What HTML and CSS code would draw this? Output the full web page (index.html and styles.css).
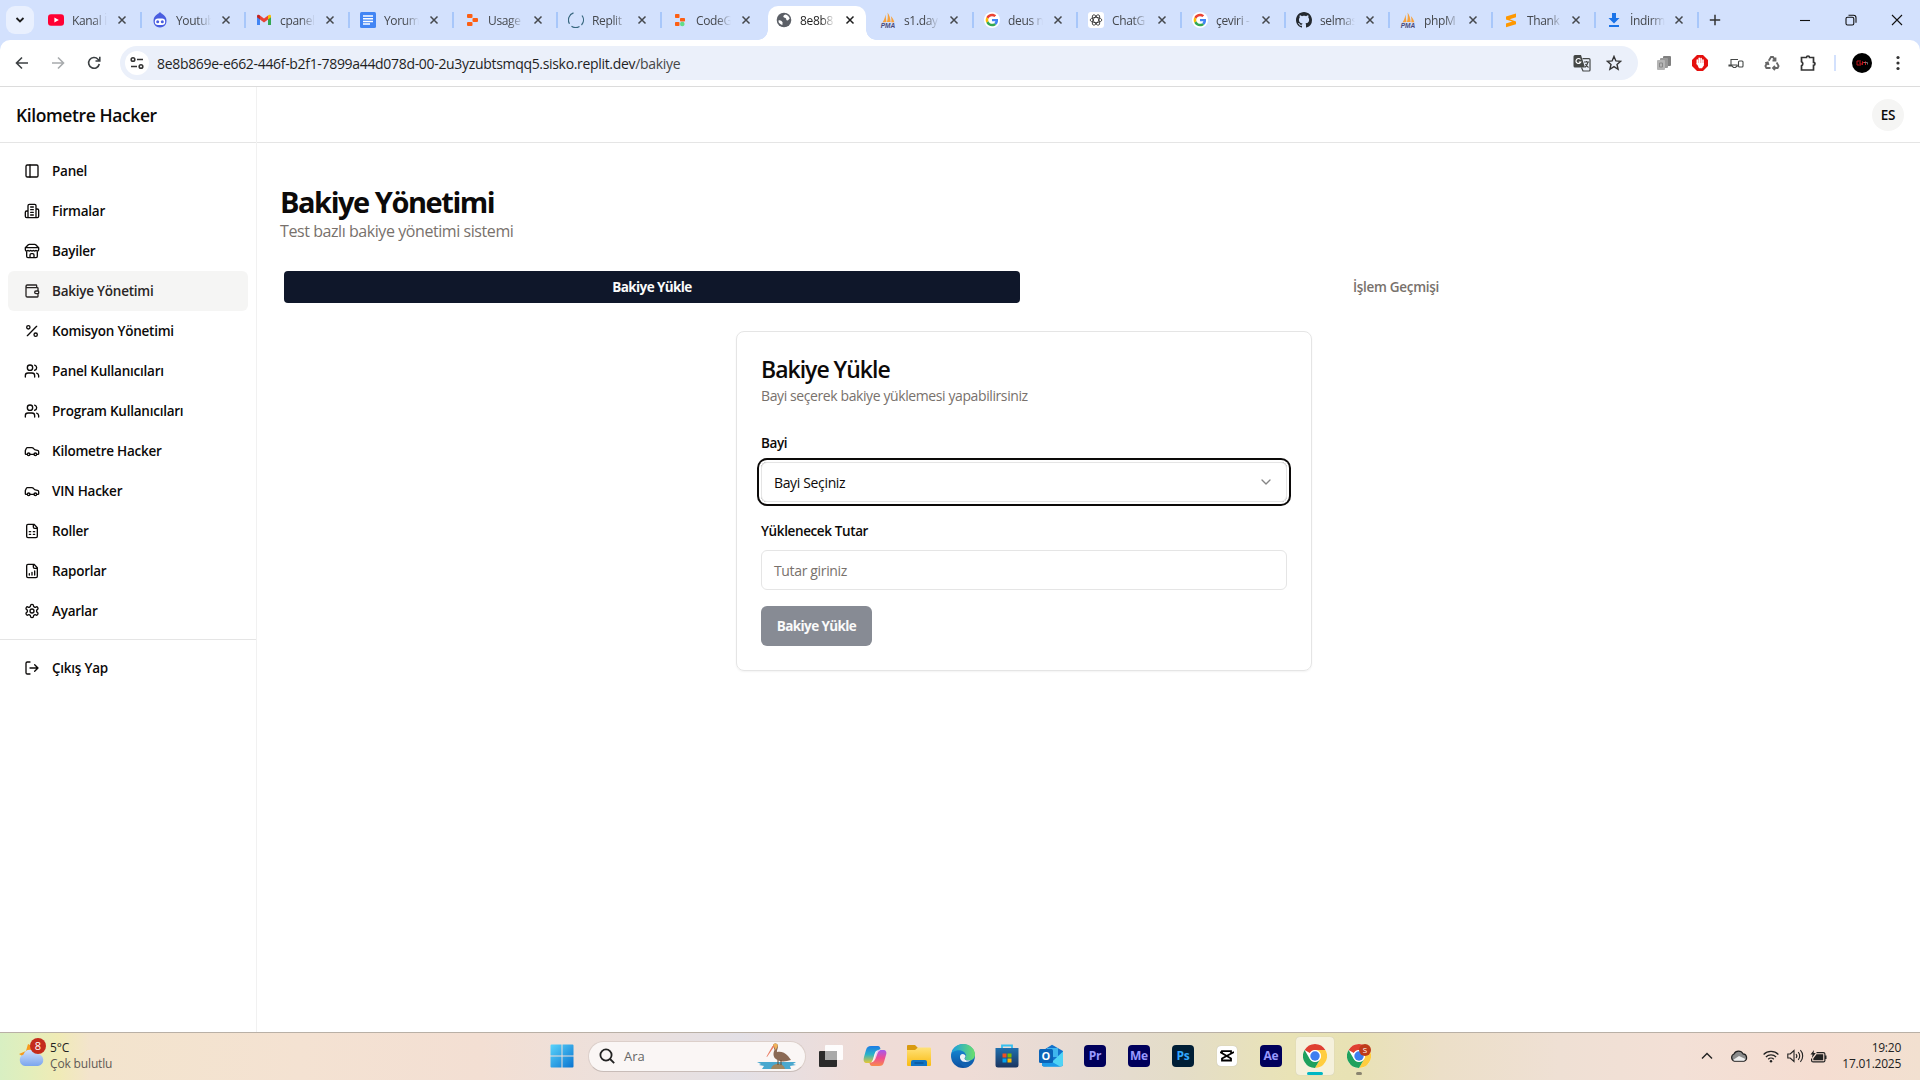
FILE: index.html
```html
<!DOCTYPE html>
<html lang="tr">
<head>
<meta charset="utf-8">
<title>Bakiye Yönetimi</title>
<link rel="stylesheet" href="styles.css">
</head>
<body>
<svg class="defs" aria-hidden="true">
  <defs>
    <linearGradient id="win" x1="0" y1="0" x2="1" y2="1"><stop offset="0" stop-color="#5ad4fb"/><stop offset="1" stop-color="#0a74d0"/></linearGradient>
    <linearGradient id="cloud" x1="0" y1="0" x2="0" y2="1"><stop offset="0" stop-color="#cfe0fb"/><stop offset="1" stop-color="#7aa5ee"/></linearGradient>
    <linearGradient id="edgeA" x1="0" y1="0" x2="1" y2="0"><stop offset="0" stop-color="#1b9de2"/><stop offset="1" stop-color="#6be06a"/></linearGradient>
    <linearGradient id="edgeB" x1="0" y1="0" x2="0" y2="1"><stop offset="0" stop-color="#1a96e0"/><stop offset="1" stop-color="#0c4fa0"/></linearGradient>
    <linearGradient id="folder" x1="0" y1="0" x2="0" y2="1"><stop offset="0" stop-color="#ffe27a"/><stop offset="1" stop-color="#f9bb12"/></linearGradient>
    <linearGradient id="store" x1="0" y1="0" x2="0" y2="1"><stop offset="0" stop-color="#1f6fae"/><stop offset="1" stop-color="#1b3560"/></linearGradient>
    <linearGradient id="copA" x1="0" y1="0" x2="0" y2="1"><stop offset="0" stop-color="#1c7be6"/><stop offset=".5" stop-color="#2bb3c8"/><stop offset="1" stop-color="#e8c832"/></linearGradient>
    <linearGradient id="copB" x1="0" y1="0" x2="0" y2="1"><stop offset="0" stop-color="#a45af0"/><stop offset=".5" stop-color="#ee4d93"/><stop offset="1" stop-color="#f98a4b"/></linearGradient>
    <symbol id="google" viewBox="0 0 48 48"><circle cx="24" cy="24" r="24" fill="#fff"/><g transform="translate(5 5) scale(.79)"><path fill="#EA4335" d="M24 9.500c3.540 0 6.710 1.220 9.210 3.600l6.850-6.850C35.900 2.380 30.470 0 24 0 14.620 0 6.510 5.380 2.560 13.220l7.980 6.190C12.430 13.720 17.740 9.500 24 9.500z"/><path fill="#4285F4" d="M46.980 24.550c0-1.570-.15-3.090-.38-4.550H24v9.020h12.940c-.58 2.960-2.260 5.480-4.780 7.180l7.730 6c4.510-4.180 7.090-10.360 7.090-17.650z"/><path fill="#FBBC05" d="M10.530 28.590A14.500 14.500 0 0 1 9.770 24c0-1.600.27-3.140.76-4.590l-7.980-6.190A23.900 23.900 0 0 0 0 24c0 3.880.92 7.540 2.560 10.780z"/><path fill="#34A853" d="M24 48c6.480 0 11.930-2.130 15.890-5.810l-7.730-6c-2.150 1.450-4.920 2.300-8.160 2.300-6.260 0-11.570-4.220-13.470-9.910l-7.980 6.190C6.510 42.620 14.620 48 24 48z"/></g></symbol>
    <symbol id="pma" viewBox="0 0 16 16"><path fill="#f7a13a" d="M2.500 10.500C4 8 5 6 5.400 2.500L6.500 10zM7 10C7.800 7 8 4 7.600.5c2 3 2.800 6 3 9.500zM11.300 10.300c.3-2 .2-4-.5-6.300 1.800 2 3 4 3.600 6.300z"/><text x="8" y="15.800" text-anchor="middle" class="pma-text">PMA</text></symbol>
    <symbol id="chrome" viewBox="0 0 24 24"><circle cx="12" cy="12" r="12" fill="#fff"/><path fill="#df4031" d="M12 0a12 12 0 0 1 10.400 6H12a6 6 0 0 0-5.200 3L1.600 6A12 12 0 0 1 12 0z"/><path fill="#ffcd40" d="M22.400 6A12 12 0 0 1 12 24l5.200-9A6 6 0 0 0 12 6z"/><path fill="#1fa15d" d="M1.600 6l5.200 9a6 6 0 0 0 10.400 0L12 24A12 12 0 0 1 1.600 6z"/><circle cx="12" cy="12" r="5.800" fill="#fff"/><circle cx="12" cy="12" r="4.700" fill="#3d7ef0"/></symbol>
    <symbol id="x" viewBox="0 0 10 10"><path d="M1.500 1.500l7 7M8.500 1.500l-7 7" stroke="currentColor" stroke-width="1.500" fill="none"/></symbol>
    <symbol id="users" viewBox="0 0 24 24"><path d="M16 21v-2a4 4 0 0 0-4-4H6a4 4 0 0 0-4 4v2"/><circle cx="9" cy="7" r="4"/><path d="M22 21v-2a4 4 0 0 0-3-3.870M16 3.130a4 4 0 0 1 0 7.750"/></symbol>
    <symbol id="car" viewBox="0 0 24 24"><path d="M19 17h2c.6 0 1-.4 1-1v-3c0-.9-.7-1.700-1.500-1.900C18.700 10.600 16 10 16 10s-1.300-1.400-2.200-2.300c-.5-.4-1.100-.7-1.800-.7H5c-.6 0-1.100.4-1.400.9l-1.400 2.900A3.700 3.700 0 0 0 2 12v4c0 .6.4 1 1 1h2"/><circle cx="7" cy="17" r="2"/><path d="M9 17h6"/><circle cx="17" cy="17" r="2"/></symbol>
  </defs>
</svg>

<header class="tabstrip">
  <div class="tab-search"><svg width="10" height="10" viewBox="0 0 10 10"><path d="M1.500 3L5 6.500 8.500 3" fill="none" stroke="#1f1f1f" stroke-width="1.800"/></svg></div>
  <div class="tabs">
    <div class="tab"><svg class="fav" viewBox="0 0 16 16"><rect y="2.300" width="16" height="11.500" rx="3" fill="#ff0033"/><path d="M6.400 5.500v5L10.800 8z" fill="#fff"/></svg><span class="tt">Kanal İ</span><svg class="x"><use href="#x"/></svg></div>
    <div class="tab"><svg class="fav" viewBox="0 0 16 16"><path d="M8 0c1 1.500 5 3 6.200 6.500C15.500 12 12.500 15.500 8 15.500S.5 12 1.800 6.500C3 3 7 1.500 8 0z" fill="#4a5ee0"/><rect x="2.800" y="6.500" width="10.400" height="6.500" rx="3.200" fill="#fff"/><circle cx="5.700" cy="9.700" r="1.500" fill="#4a5ee0"/><circle cx="10.300" cy="9.700" r="1.500" fill="#4a5ee0"/></svg><span class="tt">Youtub</span><svg class="x"><use href="#x"/></svg></div>
    <div class="tab"><svg class="fav" viewBox="0 0 16 16"><path d="M1 4.500V13h3V7z" fill="#4285f4"/><path d="M12 7v6h3V4.500z" fill="#34a853"/><path d="M4 3.500L8 6.600l4-3.100v4L8 10.500 4 7.500z" fill="#ea4335"/><path d="M1 4.300C1 2.500 3 2.400 4 3.400v4.100L1 5.300z" fill="#c5221f"/><path d="M15 4.300c0-1.800-2-1.900-3-.9v4.100l3-2.200z" fill="#fbbc04"/></svg><span class="tt">cpanel</span><svg class="x"><use href="#x"/></svg></div>
    <div class="tab"><svg class="fav" viewBox="0 0 16 16"><rect width="16" height="16" rx="1.500" fill="#4285f4"/><path d="M3 4h10M3 6.700h10M3 9.400h10M3 12.100h7" stroke="#fff" stroke-width="1.500"/></svg><span class="tt">Yorum</span><svg class="x"><use href="#x"/></svg></div>
    <div class="tab"><svg class="fav" viewBox="0 0 16 16" fill="#fd5f13"><rect x="3" y="2" width="5.500" height="4" rx="1"/><rect x="8.500" y="6" width="5.500" height="4" rx="1"/><rect x="3" y="10" width="5.500" height="4" rx="1"/></svg><span class="tt">Usage</span><svg class="x"><use href="#x"/></svg></div>
    <div class="tab"><svg class="fav" viewBox="0 0 16 16" fill="none" stroke="#37677f" stroke-width="1.200"><path d="M5.500.9A7.500 7.500 0 0 0 1.500 11.800M14 3.500a7.500 7.500 0 0 1-.5 9.500M3.500 14.200A7.500 7.500 0 0 0 11.500 14.600"/></svg><span class="tt">Replit</span><svg class="x"><use href="#x"/></svg></div>
    <div class="tab"><svg class="fav" viewBox="0 0 16 16" fill="#fd5f13"><rect x="3" y="2" width="4.500" height="4" rx=".8"/><rect x="8" y="6" width="5" height="3.500" rx=".8"/><rect x="3" y="10" width="4.500" height="4" rx=".8"/><circle cx="10.300" cy="12" r="2.300" fill="#63dd88"/></svg><span class="tt">CodeG</span><svg class="x"><use href="#x"/></svg></div>
    <div class="tab active"><svg class="fav" viewBox="0 0 16 16"><circle cx="8" cy="8" r="7.300" fill="#5b5f66"/><path d="M2.500 8.500c2-.5 3 .5 3.800 1.500 1 1-.3 1.500.2 3l-1.500-.6C3 11.500 2.300 10 2.500 8.500zM9.500 2.500c-2 .8-2.500 1.500-2 2.500.5.800 2 .5 2.500 1.500s0 2 1.500 2c1 0 1.200-1.500 2.200-1.700C13.300 4.500 11.500 3 9.500 2.500z" fill="#fff"/></svg><span class="tt">8e8b8</span><svg class="x"><use href="#x"/></svg></div>
    <div class="tab"><svg class="fav"><use href="#pma"/></svg><span class="tt">s1.day</span><svg class="x"><use href="#x"/></svg></div>
    <div class="tab"><svg class="fav"><use href="#google"/></svg><span class="tt">deus n</span><svg class="x"><use href="#x"/></svg></div>
    <div class="tab"><svg class="fav" viewBox="0 0 16 16"><rect width="16" height="16" rx="3" fill="#fff"/><g fill="none" stroke="#2d2d2d" stroke-width=".8"><ellipse cx="8" cy="8" rx="5.800" ry="2.600"/><ellipse cx="8" cy="8" rx="5.800" ry="2.600" transform="rotate(60 8 8)"/><ellipse cx="8" cy="8" rx="5.800" ry="2.600" transform="rotate(120 8 8)"/></g></svg><span class="tt">ChatG</span><svg class="x"><use href="#x"/></svg></div>
    <div class="tab"><svg class="fav"><use href="#google"/></svg><span class="tt">çeviri -</span><svg class="x"><use href="#x"/></svg></div>
    <div class="tab"><svg class="fav" viewBox="0 0 16 16"><path fill="#24292f" d="M8 0C3.580 0 0 3.580 0 8c0 3.540 2.290 6.530 5.470 7.590.4.070.55-.17.55-.38 0-.19-.01-.82-.01-1.490-2.010.37-2.530-.49-2.690-.94-.09-.23-.48-.94-.82-1.130-.28-.15-.68-.52-.01-.53.630-.01 1.080.58 1.230.82.720 1.210 1.870.87 2.330.66.070-.52.280-.87.510-1.070-1.780-.2-3.640-.89-3.640-3.950 0-.87.310-1.590.820-2.150-.08-.2-.36-1.020.080-2.120 0 0 .670-.21 2.200.820.640-.18 1.320-.27 2-.27s1.360.090 2 .27c1.530-1.040 2.200-.82 2.200-.82.440 1.100.160 1.920.080 2.120.510.560.820 1.270.820 2.150 0 3.070-1.870 3.750-3.650 3.950.290.250.540.730.540 1.480 0 1.070-.01 1.930-.01 2.200 0 .21.150.46.550.38A8.010 8.010 0 0 0 16 8c0-4.420-3.580-8-8-8z"/></svg><span class="tt">selmas</span><svg class="x"><use href="#x"/></svg></div>
    <div class="tab narrow"><svg class="fav"><use href="#pma"/></svg><span class="tt">phpM</span><svg class="x"><use href="#x"/></svg></div>
    <div class="tab narrow"><svg class="fav" viewBox="0 0 16 16"><path d="M3 4.600L13 1.500v3.700L6.700 7.200 13 9.400v2.800L3 15.200v-3.600l6.300-2L3 7.500z" fill="#ff9800"/></svg><span class="tt">Thank</span><svg class="x"><use href="#x"/></svg></div>
    <div class="tab narrow"><svg class="fav" viewBox="0 0 16 16"><path d="M6 1h4v5h3.500L8 11.500 2.500 6H6zM3 13h10v2H3z" fill="#1a73e8"/></svg><span class="tt">İndirm</span><svg class="x"><use href="#x"/></svg></div>
  </div>
  <svg class="newtab" width="12" height="12" viewBox="0 0 12 12"><path d="M6 .8v10.400M.8 6h10.400" stroke="#333" stroke-width="1.500"/></svg>
  <div class="winbtns">
    <svg viewBox="0 0 12 12"><path d="M1 6.500h10"/></svg>
    <svg viewBox="0 0 12 12"><rect x="1" y="3.200" width="7.800" height="7.800" rx="1.500"/><path d="M3.500 1.200h5A2.500 2.500 0 0 1 11 3.700v5"/></svg>
    <svg viewBox="0 0 12 12"><path d="M1 1l10 10M11 1L1 11"/></svg>
  </div>
</header>

<div class="toolbar-wrap">
<div class="toolbar">
  <nav class="navbtns">
    <svg viewBox="0 0 16 16" stroke="#3c4043"><path d="M14 8H3M8 2.500L2.500 8 8 13.500"/></svg>
    <svg viewBox="0 0 16 16" stroke="#a8abad"><path d="M2 8h11M8 2.500L13.500 8 8 13.500"/></svg>
    <svg viewBox="0 0 16 16" stroke="#3c4043"><path d="M13.300 9A5.400 5.400 0 1 1 12 4.200L13.800 6M13.800 1.800V6H9.500"/></svg>
  </nav>
  <div class="omnibox">
    <span class="site"><svg width="16" height="16" viewBox="0 0 16 16" fill="none" stroke="#333" stroke-width="1.600"><circle cx="4" cy="4.500" r="1.800"/><path d="M8 4.500h6M2 11.500h6"/><circle cx="12" cy="11.500" r="1.800"/></svg></span>
    <span class="url">8e8b869e-e662-446f-b2f1-7899a44d078d-00-2u3yzubtsmqq5.sisko.replit.dev<span class="path">/bakiye</span></span>
    <svg class="translate" width="18" height="18" viewBox="0 0 18 18"><path d="M2 1h6l4 12.500H2A1.500 1.500 0 0 1 .5 12V2.500A1.500 1.500 0 0 1 2 1z" fill="#444746"/><path d="M7.500 5.500A2.500 2.500 0 1 0 7.800 8H5.800" fill="none" stroke="#fff" stroke-width="1.200"/><path d="M9.500 4.700H16a1 1 0 0 1 1 1V16a1 1 0 0 1-1 1H10L8.500 13.500M11 8h5M13.500 7v1M15 8.200c-.5 2-1.500 4-3 5M12.500 10c.7 1.500 1.500 2.500 3 3.500" fill="none" stroke="#444746" stroke-width="1.200"/></svg>
    <svg width="16" height="16" viewBox="0 0 16 16"><path d="M8 1.400l1.900 4.500 4.800.4-3.700 3.200 1.100 4.800L8 11.700l-4.100 2.600L5 9.500 1.300 6.300l4.800-.4z" fill="none" stroke="#333" stroke-width="1.400"/></svg>
  </div>
  <div class="exts">
    <svg viewBox="0 0 16 16"><rect x="7" y="1" width="8" height="10" rx="1" fill="#808080"/><rect x="4" y="3" width="8" height="10" rx="1" fill="#9a9a9a"/><rect x="1" y="5" width="8" height="10" rx="1" fill="#b5b5b5"/><path d="M3.500 8h3v4h-3z" fill="none" stroke="#888"/></svg>
    <svg viewBox="0 0 16 16"><path d="M5 0h6l5 5v6l-5 5H5l-5-5V5z" fill="#e5100e"/><path d="M5.300 9V5M7.200 8V3.200M9.100 8V3.500M11 9V5" stroke="#fff" stroke-width="1.600" stroke-linecap="round"/><path d="M4.500 8h7.300v2.500L10 13.200H7z" fill="#fff"/></svg>
    <svg viewBox="0 0 16 16" fill="none" stroke="#444746" stroke-width="1.100"><path d="M10 4.500H3v5.500H1v1h3l1.500 1.500h2L9 11h1.500M3 10h6.500"/><rect x="10.500" y="6" width="4.500" height="6" rx="1"/></svg>
    <svg viewBox="0 0 16 16" fill="none" stroke="#666" stroke-width="1.800"><path d="M4.700 5.800L7 2h2l1.800 3M11.500 2.500v3h-3M12.600 7.500l2 3.500-1 2H9.500M11 11l-2 2 2 2M6.500 13H2.400l-1-2 2-3.500M1.200 8l2.600-.7.8 2.700"/></svg>
    <svg viewBox="0 0 16 16" fill="none" stroke="#333" stroke-width="1.700"><path d="M1.500 2.500h5a1.500 1.500 0 0 1 3 0h4v4.800a1.500 1.500 0 0 1 0 3V15h-12v-4.200a2.200 2.200 0 0 0 0-4z"/></svg>
  </div>
  <i class="tb-sep"></i>
  <svg class="avatar" width="20" height="20" viewBox="0 0 20 20"><circle cx="10" cy="10" r="10" fill="#000"/><path d="M5 8h4M5 8v4h4v-2H7M10.500 12V8.500l1.500 1.500 1.500-1.500V12" fill="none" stroke="#c2141b"/><path d="M12 9.500h3.500v2" fill="none" stroke="#888" stroke-width=".8"/></svg>
  <svg class="dots" width="4" height="16" viewBox="0 0 4 16" fill="#333"><circle cx="2" cy="2.500" r="1.600"/><circle cx="2" cy="8" r="1.600"/><circle cx="2" cy="13.500" r="1.600"/></svg>
</div>
</div>

<div class="app">
  <aside class="sidebar">
    <div class="brand"><span>Kilometre Hacker</span></div>
    <ul class="menu">
      <li><svg class="li" viewBox="0 0 24 24"><rect x="3" y="3" width="18" height="18" rx="2"/><path d="M9 3v18"/></svg><span>Panel</span></li>
      <li><svg class="li" viewBox="0 0 24 24"><path d="M6 22V4a2 2 0 0 1 2-2h8a2 2 0 0 1 2 2v18ZM6 12H4a2 2 0 0 0-2 2v6a2 2 0 0 0 2 2h2M18 9h2a2 2 0 0 1 2 2v9a2 2 0 0 1-2 2h-2M10 6h4M10 10h4M10 14h4M10 18h4"/></svg><span>Firmalar</span></li>
      <li><svg class="li" viewBox="0 0 24 24"><path d="m2 7 4.410-4.410A2 2 0 0 1 7.830 2h8.340a2 2 0 0 1 1.420.590L22 7M4 12v8a2 2 0 0 0 2 2h12a2 2 0 0 0 2-2v-8M15 22v-4a2 2 0 0 0-2-2h-2a2 2 0 0 0-2 2v4M2 7h20M22 7v3a2 2 0 0 1-2 2a2.700 2.700 0 0 1-1.590-.63.7.7 0 0 0-.82 0A2.700 2.700 0 0 1 16 12a2.700 2.700 0 0 1-1.590-.63.7.7 0 0 0-.82 0A2.700 2.700 0 0 1 12 12a2.700 2.700 0 0 1-1.590-.63.7.7 0 0 0-.82 0A2.700 2.700 0 0 1 8 12a2.700 2.700 0 0 1-1.590-.63.7.7 0 0 0-.82 0A2.700 2.700 0 0 1 4 12a2 2 0 0 1-2-2V7"/></svg><span>Bayiler</span></li>
      <li class="on"><svg class="li" viewBox="0 0 24 24"><path d="M19 7V4a1 1 0 0 0-1-1H5a2 2 0 0 0 0 4h15a1 1 0 0 1 1 1v4h-3a2 2 0 0 0 0 4h3a1 1 0 0 0 1-1v-2a1 1 0 0 0-1-1M3 5v14a2 2 0 0 0 2 2h15a1 1 0 0 0 1-1v-4"/></svg><span>Bakiye Yönetimi</span></li>
      <li><svg class="li" viewBox="0 0 24 24"><path d="M19 5L5 19"/><circle cx="6.500" cy="6.500" r="2.500"/><circle cx="17.500" cy="17.500" r="2.500"/></svg><span>Komisyon Yönetimi</span></li>
      <li><svg class="li"><use href="#users"/></svg><span>Panel Kullanıcıları</span></li>
      <li><svg class="li"><use href="#users"/></svg><span>Program Kullanıcıları</span></li>
      <li><svg class="li"><use href="#car"/></svg><span>Kilometre Hacker</span></li>
      <li><svg class="li"><use href="#car"/></svg><span>VIN Hacker</span></li>
      <li><svg class="li" viewBox="0 0 24 24"><path d="M15 2H6a2 2 0 0 0-2 2v16a2 2 0 0 0 2 2h12a2 2 0 0 0 2-2V7ZM14 2v4a2 2 0 0 0 2 2h4M8 13h2M14 13h2M8 17h2M14 17h2"/></svg><span>Roller</span></li>
      <li><svg class="li" viewBox="0 0 24 24"><path d="M15 2H6a2 2 0 0 0-2 2v16a2 2 0 0 0 2 2h12a2 2 0 0 0 2-2V7ZM14 2v4a2 2 0 0 0 2 2h4M8 18v-2M12 18v-4M16 18v-6"/></svg><span>Raporlar</span></li>
      <li><svg class="li" viewBox="0 0 24 24"><path d="M12.220 2h-.44a2 2 0 0 0-2 2v.18a2 2 0 0 1-1 1.730l-.43.250a2 2 0 0 1-2 0l-.15-.08a2 2 0 0 0-2.730.730l-.22.380a2 2 0 0 0 .730 2.730l.150.100a2 2 0 0 1 1 1.720v.510a2 2 0 0 1-1 1.740l-.15.090a2 2 0 0 0-.73 2.730l.220.380a2 2 0 0 0 2.730.730l.150-.08a2 2 0 0 1 2 0l.430.250a2 2 0 0 1 1 1.730V20a2 2 0 0 0 2 2h.440a2 2 0 0 0 2-2v-.18a2 2 0 0 1 1-1.730l.430-.25a2 2 0 0 1 2 0l.150.080a2 2 0 0 0 2.730-.73l.220-.39a2 2 0 0 0-.73-2.730l-.15-.08a2 2 0 0 1-1-1.740v-.5a2 2 0 0 1 1-1.740l.150-.09a2 2 0 0 0 .730-2.730l-.22-.38a2 2 0 0 0-2.730-.73l-.15.080a2 2 0 0 1-2 0l-.43-.25a2 2 0 0 1-1-1.730V4a2 2 0 0 0-2-2z"/><circle cx="12" cy="12" r="3"/></svg><span>Ayarlar</span></li>
    </ul>
    <ul class="menu logout">
      <li><svg class="li" viewBox="0 0 24 24"><path d="M9 21H5a2 2 0 0 1-2-2V5a2 2 0 0 1 2-2h4M16 17l5-5-5-5M21 12H9"/></svg><span>Çıkış Yap</span></li>
    </ul>
  </aside>
  <div class="content">
    <div class="topbar"><span class="user">ES</span></div>
    <main class="main">
      <h1>Bakiye Yönetimi</h1>
      <p class="lead">Test bazlı bakiye yönetimi sistemi</p>
      <div class="seg">
        <button class="seg-on">Bakiye Yükle</button>
        <button>İşlem Geçmişi</button>
      </div>
      <section class="card">
        <h2>Bakiye Yükle</h2>
        <p class="desc">Bayi seçerek bakiye yüklemesi yapabilirsiniz</p>
        <div class="label">Bayi</div>
        <div class="field focus"><span>Bayi Seçiniz</span><svg width="16" height="16" viewBox="0 0 24 24" fill="none" stroke="#858585" stroke-width="2" stroke-linecap="round" stroke-linejoin="round"><path d="m6 9 6 6 6-6"/></svg></div>
        <div class="label second">Yüklenecek Tutar</div>
        <div class="field muted"><span>Tutar giriniz</span></div>
        <button class="submit">Bakiye Yükle</button>
      </section>
    </main>
  </div>
</div>

<footer class="taskbar">
  <div class="weather">
    <svg width="30" height="32" viewBox="0 0 30 32"><path d="M1 17l7-3 2-7 6 3 2 10H6z" fill="#f79a1c"/><path d="M7 29a6 6 0 0 1-1.500-11.500A7 7 0 0 1 18.500 17 6 6 0 0 1 20 29z" fill="url(#cloud)"/><circle cx="20" cy="9" r="8" fill="#c42b1c"/><text x="20" y="13" text-anchor="middle" class="badge">8</text></svg>
    <div class="wt"><span class="temp">5°C</span><span class="cond">Çok bulutlu</span></div>
  </div>
  <div class="pins">
    <div class="pin"><svg viewBox="0 0 24 24" fill="url(#win)"><path d="M.5 1.500A1 1 0 0 1 1.500.5h10v11H.5zM12.500.5h10a1 1 0 0 1 1 1v10h-11zM.5 12.500h11v11h-10a1 1 0 0 1-1-1zM12.500 12.500h11v10a1 1 0 0 1-1 1h-10z"/></svg></div>
    <div class="search"><svg width="16" height="16" viewBox="0 0 16 16" fill="none" stroke="#222" stroke-width="1.800"><circle cx="7" cy="7" r="5.600"/><path d="M11 11l4.200 4.200"/></svg><span class="ara">Ara</span>
      <svg class="pelican" width="42" height="28" viewBox="0 0 42 28"><path d="M1 20h39l-3 2 3 1-6 1 1 3H6l2-3-5-1 2-1z" fill="#4aa8cf"/><path d="M15 27c1-4 4-5 7-5s6 1 7 5z" fill="#a08660"/><path d="M17 3c2-2.500 5-1.500 5 1 0 3-1.500 4-1 6 3-1 8 0 11 4l3 4c-6 2-12 2-15-1-3-2-3-6-1.500-9z" fill="#8b6a55"/><path d="M17 2.500c2-2 5-1 4.700 1.500l-2 4-1.500-3z" fill="#f0b35a"/><path d="M18.500 4L11 15l-.5-.5L16.500 4z" fill="#ea7b62"/><path d="M22 18v5M25 18v5" stroke="#6b4a30"/></svg>
    </div>
    <div class="pin"><svg viewBox="0 0 24 24"><rect x="0" y="7" width="18" height="16" rx="1" fill="#2a2a2a"/><rect x="6" y="1" width="18" height="15" rx="1" fill="#fff" opacity=".9"/><path d="M6 7h12v9H6z" fill="#a9a9a9"/></svg></div>
    <div class="pin"><svg viewBox="0 0 24 24"><path d="M8 2h7c1.500 0 2 1 2.500 3l-4 2c-1.500 1-2 3-3 7s-1.500 5-4 5H4c-3 0-4-2-3-6l2-7c1-3 2-4 5-4z" fill="url(#copA)"/><path d="M16 22H9c-1.500 0-2-1-2.500-3l3-1c1.500-1 2-3 3-7s2-5 4-5H20c3 0 4 2 3 5l-2 7c-1 3-2 4-5 4z" fill="url(#copB)"/><path d="M13 7c2-1 3-1 4.500-1l-2 1.500C13.500 11 13 16 10 18l-2.500.5C11 17 11 9 13 7z" fill="#fff" opacity=".7"/></svg></div>
    <div class="pin"><svg viewBox="0 0 24 24"><path d="M0 2a1 1 0 0 1 1-1h7l3 3v3H0z" fill="#d99a10"/><path d="M0 6h8l3-2.500h12a1 1 0 0 1 1 1V21a1 1 0 0 1-1 1H1a1 1 0 0 1-1-1z" fill="url(#folder)"/><path d="M4 22v-4a2 2 0 0 1 2-2h12a2 2 0 0 1 2 2v4z" fill="#1174c4"/><path d="M7.500 19h9" stroke="#0a4d90" stroke-width="1.200"/></svg></div>
    <div class="pin"><svg viewBox="0 0 24 24"><circle cx="12" cy="12" r="12" fill="url(#edgeB)"/><path d="M.5 9C2 3.500 6.500 0 12 0c7 0 12 5 12 10.500 0 3.500-2.500 6-6 6-3 0-4.500-1-4-2.500 1-1 1.300-2 1-3C14 7 9 5.500 5.500 6.500 3 7.200 1.300 8 .5 9z" fill="url(#edgeA)"/><path d="M10 10.500c-1 4 1.500 9 7 9 2.500 0 4.500-1 5.500-2-2 4-5.500 5.500-8 5.800C9 22 6.500 15 10 10.500z" fill="#1260b0"/><path d="M9.500 11c1.500-2 5-1 5 1.200 0 1-1 1.300-1 2.300 0 1.500 3 2.700 6 1.700-2 2-8 3-10-1-.7-1.500-.7-3 0-4.200z" fill="#eef3f8"/></svg></div>
    <div class="pin"><svg viewBox="0 0 24 24"><path d="M7 5V1.500h10V5" fill="none" stroke="#35bff0" stroke-width="1.800"/><path d="M.5 4h23v17a2.500 2.500 0 0 1-2.500 2.500H3A2.500 2.500 0 0 1 .5 21z" fill="url(#store)"/><path d="M7.500 9.500h4v4h-4z" fill="#f25022"/><path d="M12.500 9.500h4v4h-4z" fill="#7fba00"/><path d="M7.500 14.500h4v4h-4z" fill="#00a4ef"/><path d="M12.500 14.500h4v4h-4z" fill="#ffb900"/></svg></div>
    <div class="pin"><svg viewBox="0 0 24 24"><path d="M3 7L13 .8 24 7v13a2.500 2.500 0 0 1-2.500 2.500H5A2 2 0 0 1 3 20z" fill="#1372cc"/><path d="M8 4h11v9H8z" fill="#3fb5ee"/><path d="M24 7.500V20a2.500 2.500 0 0 1-2.500 2.500H8z" fill="#50d3f5"/><path d="M3 12l18 10.500H5A2 2 0 0 1 3 20z" fill="#1d9ae8"/><rect y="5" width="14" height="14" rx="1.500" fill="#0a63b8"/><text x="7" y="16" text-anchor="middle" class="ol">O</text></svg></div>
    <div class="pin"><b class="adobe">Pr</b></div>
    <div class="pin"><b class="adobe">Me</b></div>
    <div class="pin"><b class="adobe ps">Ps</b></div>
    <div class="pin"><span class="capcut"><svg width="14" height="12" viewBox="0 0 14 12" fill="none" stroke="#000" stroke-width="1.800"><path d="M14 2L2 8.500v2h9V8.500L0 2M2 3.500V1.200h9v1.500"/></svg></span></div>
    <div class="pin"><b class="adobe">Ae</b></div>
    <div class="pin run"><svg><use href="#chrome"/></svg><i class="bar"></i></div>
    <div class="pin"><svg viewBox="0 0 24 24"><use href="#chrome" width="24" height="24"/><circle cx="18" cy="6" r="6" fill="#bf3b1a"/><text x="18" y="8.800" text-anchor="middle" class="sb">S</text></svg><i class="bar dim"></i></div>
  </div>
  <div class="tray">
    <svg width="12" height="8" viewBox="0 0 12 8" fill="none" stroke="#222" stroke-width="1.400"><path d="M1 6.500l5-5 5 5"/></svg>
    <svg class="od" width="18" height="12" viewBox="0 0 18 12"><path d="M4.500 11.200A3.800 3.800 0 0 1 4 4a5 5 0 0 1 9-.2 3.800 3.800 0 0 1 1 7.400z" fill="#8c8c8c" stroke="#222" stroke-width="1.200"/><path d="M3 10l6-4 6.500 3-1.500 1.700H4.500z" fill="#eee"/></svg>
    <svg class="wifi" width="16" height="13" viewBox="0 0 16 13" fill="none" stroke="#222" stroke-width="1.200"><path d="M.6 4.500a10.500 10.500 0 0 1 14.800 0M2.900 7a7.200 7.200 0 0 1 10.200 0M5.200 9.300a4 4 0 0 1 5.600 0"/><circle cx="8" cy="11.300" r="1.200" fill="#222" stroke="none"/></svg>
    <svg class="spk" width="17" height="14" viewBox="0 0 17 14" fill="none" stroke="#222" stroke-width="1.100"><path d="M.8 5h2.400L7 1.500v11L3.200 9H.8zM9 5a3 3 0 0 1 0 4M11.200 3.200a5.500 5.500 0 0 1 0 7.600M13.400 1.200a8.500 8.500 0 0 1 0 11.600"/></svg>
    <svg class="bat" width="17" height="13" viewBox="0 0 17 13"><path d="M6.500 2.600h6.900a1.500 1.500 0 0 1 1.500 1.500v6.300a1.500 1.500 0 0 1-1.500 1.500H3.100a1.500 1.500 0 0 1-1.500-1.500V8.500" fill="none" stroke="#222" stroke-width="1.200"/><path d="M6.500 4.300h6.700v6H3.300V8.500zM15 5.500h1.500V9H15z" fill="#222"/><path d="M4 0L.5 4.500H2.500L2 8l3.800-5H3.600z" fill="#222"/></svg>
    <div class="clock"><span>19:20</span><span>17.01.2025</span></div>
  </div>
</footer>
</body>
</html>
```
FILE: styles.css
```css
* { box-sizing: border-box; }
body {
  margin: 0;
  width: 1920px;
  height: 1080px;
  overflow: hidden;
  display: flex;
  flex-direction: column;
  background: #fff;
  color: #0c0a09;
  font-family: "Open Sans", "Noto Sans", sans-serif;
  font-size: 14px;
}
ul, h1, h2, p { margin: 0; padding: 0; }
svg { display: block; flex: none; }
.defs { position: absolute; width: 0; height: 0; }

/* browser tab strip */
.tabstrip { height: 40px; flex: none; display: flex; align-items: center; background: #d3e1fd; padding-left: 6px; }
.tab-search { width: 28px; height: 28px; margin-right: 6px; border-radius: 9px; background: #e9f0fe; display: grid; place-items: center; }
.tabs { display: flex; height: 40px; padding-top: 6px; }
.tab { position: relative; width: 104px; height: 34px; display: flex; align-items: center; padding: 0 0 6px 8px; color: #45484d; }
.tab.narrow { width: 103px; }
.tab::after { content: ""; position: absolute; right: 2px; top: 6px; width: 2px; height: 16px; background: #a8c7fa; }
.tab:nth-child(7)::after { display: none; }
.fav { width: 16px; height: 16px; }
.tt { width: 35px; margin: 2px 0 0 8px; white-space: nowrap; font-size: 12px; line-height: 18px; letter-spacing: -.35px; -webkit-mask-image: linear-gradient(90deg, #000 60%, transparent); mask-image: linear-gradient(90deg, #000 60%, transparent); }
.x { width: 10px; height: 10px; margin-left: 10px; }
.narrow .x { margin-left: 9px; }
.tab.active { color: #1f1f1f; }
.tab.active::before { content: ""; position: absolute; left: 0; top: 0; width: 98px; height: 34px; background: #fff; border-radius: 10px 10px 0 0; }
.tab.active::after { left: -10px; top: 24px; width: 118px; height: 10px; background: radial-gradient(circle at 0 0, transparent 9.500px, #fff 10px) 0 0 / 10px 10px no-repeat, radial-gradient(circle at 100% 0, transparent 9.500px, #fff 10px) 100% 0 / 10px 10px no-repeat; }
.tab.active > * { position: relative; z-index: 1; }
.pma-text { font: italic bold 6.500px "Liberation Sans", sans-serif; fill: #4a4a7a; }
.newtab { margin-left: 8px; }
.winbtns { margin-left: auto; display: flex; gap: 34px; padding-right: 17px; }
.winbtns svg { width: 12px; height: 12px; fill: none; stroke: #111; stroke-width: 1.100; }

/* address bar */
.toolbar-wrap { flex: none; height: 47px; background: #d3e1fd; }
.toolbar { height: 47px; display: flex; align-items: center; background: #fff; border-bottom: 1px solid #dcdcdc; border-radius: 10px 10px 0 0; padding: 0 20px 0 14px; }
.navbtns { display: flex; gap: 20px; width: 106px; }
.navbtns svg { width: 16px; height: 16px; fill: none; stroke-width: 1.600; }
.omnibox { width: 1518px; height: 34px; border-radius: 17px; background: #ebf0fa; display: flex; align-items: center; padding: 0 16px 0 5px; }
.site { width: 24px; height: 24px; border-radius: 50%; background: #fff; display: grid; place-items: center; }
.url { margin-left: 8px; white-space: nowrap; color: #1f1f1f; letter-spacing: -.32px; }
.path { color: #474747; }
.translate { margin: 0 15px 0 auto; }
.exts { display: flex; gap: 20px; margin-left: 18px; }
.exts svg { width: 16px; height: 16px; }
.tb-sep { width: 2px; height: 16px; background: #d3e1fd; margin: 0 16px 0 18px; }
.dots { margin-left: auto; }

/* application */
.app { flex: 1; display: flex; }
.sidebar { width: 257px; border-right: 1px solid #f1f1f1; }
.brand { height: 56px; padding: 0 16px; display: flex; align-items: center; border-bottom: 1px solid #e5e5e5; font-size: 17.500px; font-weight: 550; letter-spacing: -.4px; }
.menu { list-style: none; padding: 8px; }
.menu li { height: 40px; border-radius: 6px; padding: 0 16px; display: flex; align-items: center; gap: 12px; font-weight: 600; font-size: 13.500px; letter-spacing: -.24px; }
.menu li.on { background: #f5f5f4; color: #292524; }
.li { width: 16px; height: 16px; fill: none; stroke: currentColor; stroke-width: 2; stroke-linecap: round; stroke-linejoin: round; }
.logout { border-top: 1px solid #e5e5e5; }
.content { flex: 1; }
.topbar { height: 56px; border-bottom: 1px solid #e5e5e5; display: flex; align-items: center; justify-content: flex-end; padding-right: 16px; }
.user { width: 32px; height: 32px; border-radius: 50%; background: #f5f5f4; display: grid; place-items: center; font-weight: 600; font-size: 13.500px; letter-spacing: -.3px; }
.main { width: 1511px; padding: 40px 0 0 23px; }
h1 { font-size: 29px; line-height: 36px; padding-top: 1px; height: 36px; font-weight: 700; letter-spacing: -1.450px; }
.lead { font-size: 16px; line-height: 24px; color: #78716c; letter-spacing: -.43px; }
.seg { margin-top: 24px; padding: 4px; height: 40px; display: grid; grid-template-columns: 1fr 1fr; gap: 8px; }
button { border: 0; background: none; font: 600 13.500px/20px "Open Sans", "Noto Sans", sans-serif; color: #78716c; padding: 0; letter-spacing: -.3px; }
.seg button { border-radius: 4px; }
.seg .seg-on { background: #0f172a; color: #fafafa; }
.seg-on, .submit { font-weight: 700; letter-spacing: -.6px; }
.card { width: 576px; height: 340px; margin: 24px auto 0; padding: 24px; border: 1px solid #e5e5e5; border-radius: 8px; box-shadow: 0 1px 2px rgba(0,0,0,.05); }
h2 { font-size: 23px; line-height: 24px; height: 24px; padding-top: 1px; font-weight: 600; letter-spacing: -1px; }
.desc { margin: 6px 0 24px; line-height: 20px; color: #78716c; letter-spacing: -.4px; }
.label { height: 24px; line-height: 26px; margin-bottom: 8px; font-weight: 600; font-size: 13.500px; letter-spacing: -.38px; }
.label.second { margin-top: 16px; }
.field { height: 40px; border: 1px solid #e5e5e5; border-radius: 6px; padding: 0 12px; display: flex; align-items: center; justify-content: space-between; letter-spacing: -.35px; }
.focus { box-shadow: 0 0 0 2px #fff, 0 0 0 4px #0c0a09; }
.muted { color: #78716c; }
.submit { margin-top: 16px; width: 111px; height: 40px; border-radius: 6px; background: #878b94; color: #fafafa; }

/* taskbar */
.taskbar { height: 48px; flex: none; border-top: 1px solid #b9b0a6; display: flex; background: linear-gradient(90deg, #d8efc2 0, #e3eebb 30px, #f0ebb6 58px, #f3e4cd 90px, #f4e2d2 300px, #f3dfd3 480px, #ece0dc 620px, #e3e0e6 740px, #efdcd7 860px, #efdcd6 960px, #e6dbd3 1080px, #e4ddc8 1180px, #e9e3b6 1290px, #e8e2b4 1350px, #ecdfc8 1440px, #efe0d4 1560px, #f3e0d6 1680px, #f5ddd1 1820px, #f2e0d0 1920px); }
.weather { width: 540px; display: flex; padding: 4px 0 0 18px; }
.badge { font: 11px "Open Sans", sans-serif; fill: #fff; }
.wt { margin: 3px 0 0 2px; display: flex; flex-direction: column; align-items: flex-start; font-size: 12px; line-height: 16px; letter-spacing: -.15px; }
.temp { color: #222; }
.cond { color: #5f5a55; }
.pins { display: flex; align-items: center; width: 841px; padding-bottom: 1px; }
.pin { position: relative; width: 44px; height: 38px; display: grid; place-items: center; }
.pin > svg { width: 24px; height: 24px; }
.search { width: 218px; height: 31px; margin: 0 3px 0 4px; border-radius: 16px; background: #faf6f5; border: 1px solid #dccfca; border-bottom-color: #c8bcb8; display: flex; align-items: center; padding: 0 7px 0 10px; }
.ara { margin-left: 9px; color: #666; font-size: 13px; }
.pelican { margin-left: auto; }
.adobe { width: 22px; height: 22px; border-radius: 4px; background: #00005b; color: #9999ff; font-size: 12px; line-height: 21px; text-align: center; letter-spacing: -.3px; }
.ps { background: #001e36; color: #31a8ff; }
.capcut { width: 20px; height: 20px; border-radius: 4px; background: #fff; display: grid; place-items: center; box-shadow: 0 0 1px #aaa; }
.run::before { content: ""; position: absolute; left: 3px; top: 0; width: 38px; height: 38px; border-radius: 4px; background: #f5f1dc; box-shadow: 0 0 1px #bbb; }
.run svg { position: relative; }
.bar { position: absolute; left: 14px; bottom: 0; width: 16px; height: 3px; border-radius: 2px; background: #00b7c3; }
.bar.dim { left: 19px; width: 6px; background: #8a8470; }
.ol { font: bold 11px "Open Sans", sans-serif; fill: #fff; }
.sb { font: 8px "Open Sans", sans-serif; fill: #fff; }
.tray { flex: 1; display: flex; align-items: center; padding: 0 0 1px 320px; }
.od { margin-left: 17px; }
.wifi { margin-left: 15px; }
.spk { margin-left: 8px; }
.bat { margin-left: 6px; }
.clock { margin: 0 19px 0 auto; display: flex; flex-direction: column; align-items: flex-end; font-size: 12px; line-height: 16px; letter-spacing: -.25px; color: #222; }
```
